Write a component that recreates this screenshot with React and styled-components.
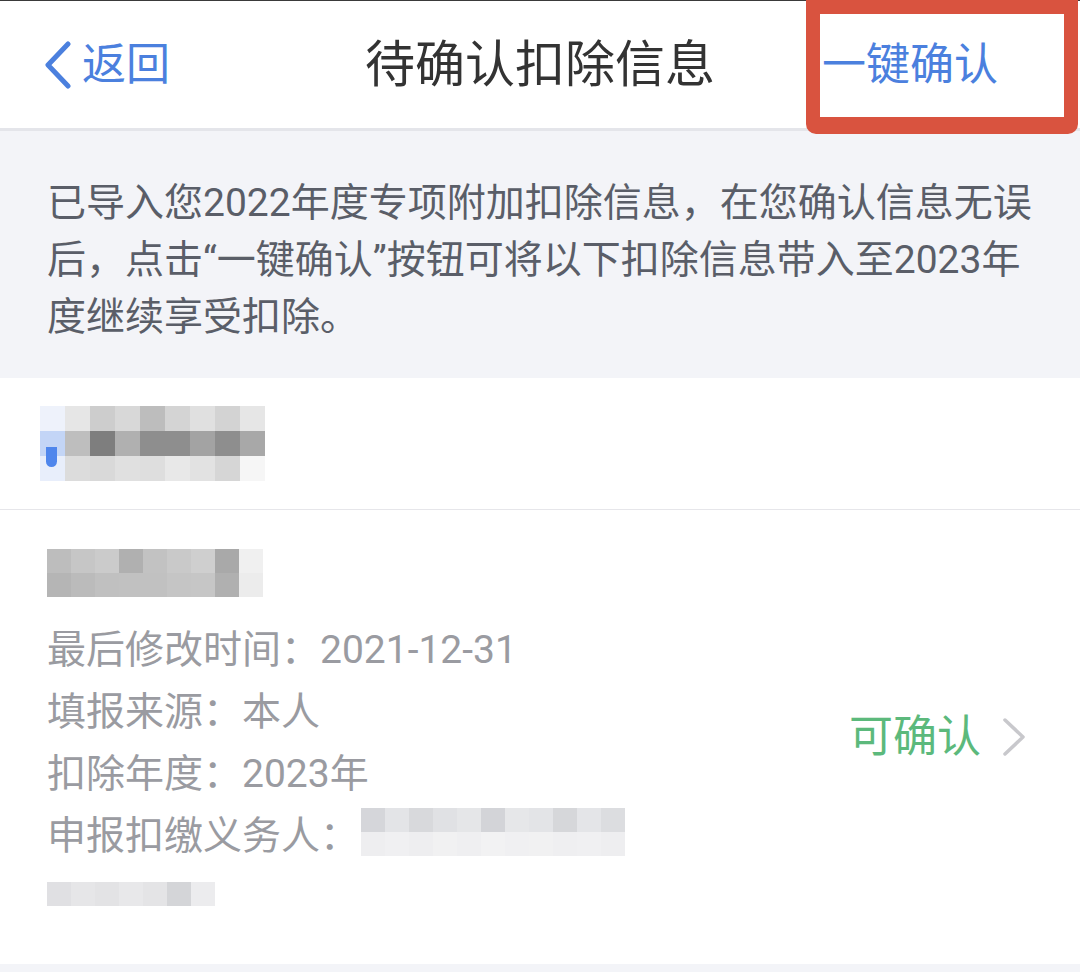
import React from "react";
import styled, { createGlobalStyle } from "styled-components";

const GlobalStyle = createGlobalStyle`
  html, body {
    margin: 0;
    padding: 0;
    background: #ffffff;
  }
  * {
    box-sizing: border-box;
  }
`;

const Page = styled.div`
  width: 1080px;
  height: 972px;
  overflow: hidden;
  display: flex;
  flex-direction: column;
  background: #f3f4f8;
  font-family: Roboto, "Noto Sans CJK SC", sans-serif;
`;

const NavBar = styled.header`
  position: relative;
  height: 131px;
  flex-shrink: 0;
  display: grid;
  grid-template-columns: 1fr auto 1fr;
  align-items: center;
  background: #ffffff;
  border-top: 1px solid #3a3a3a;
  border-bottom: 3px solid #e4e5ea;
`;

const BackButton = styled.div`
  display: flex;
  align-items: center;
  gap: 10px;
  padding-left: 44px;
  color: #4b80de;
  font-size: 44px;
  line-height: 1;
  justify-self: start;
`;

const Title = styled.h1`
  margin: 0;
  font-size: 50px;
  font-weight: 400;
  color: #333333;
  line-height: 1;
`;

const NavAction = styled.div`
  justify-self: end;
  padding-right: 82px;
  color: #4b80de;
  font-size: 44px;
  line-height: 1;
`;

/* red annotation frame laid over the nav action */
const Highlight = styled.div`
  position: absolute;
  top: -1px;
  left: 806px;
  width: 272px;
  height: 134px;
  border: 14px solid #d9533f;
  border-bottom-width: 17px;
  border-radius: 0 0 10px 10px;
  pointer-events: none;
`;

const Notice = styled.section`
  flex-shrink: 0;
  padding: 44px 30px 32px 47px;
  background: #f3f4f8;
  color: #5a5e68;
  font-size: 39px;
  line-height: 57px;
  white-space: nowrap;
`;

const NoticeLine = styled.div``;

const NameRow = styled.div`
  flex-shrink: 0;
  height: 132px;
  display: flex;
  align-items: center;
  padding-left: 40px;
  background: #ffffff;
  border-bottom: 1px solid #e6e6ea;
`;

const ItemRow = styled.div`
  flex-shrink: 0;
  height: 454px;
  display: flex;
  align-items: center;
  justify-content: space-between;
  padding: 39px 53px 39px 47px;
  background: #ffffff;
`;

const InfoColumn = styled.div`
  display: flex;
  flex-direction: column;
`;

const InfoLine = styled.div`
  height: ${(p) => p.$h || 62}px;
  display: flex;
  align-items: ${(p) => (p.$top ? "flex-start" : "center")};
  font-size: 39px;
  color: #9a9ba1;
  white-space: nowrap;
`;

const Status = styled.div`
  display: flex;
  align-items: center;
  gap: 20px;
  color: #5cb97c;
  font-size: 44px;
  line-height: 1;
`;

const MosaicWrap = styled.div`
  position: relative;
  display: inline-flex;
  flex-direction: column;
  margin-left: ${(p) => p.$gap || 0}px;
`;

const Mosaic = styled.div`
  display: grid;
  grid-template-columns: repeat(${(p) => p.$cols}, ${(p) => p.$size}px);
  grid-auto-rows: ${(p) => p.$size}px;
`;

const Cell = styled.span`
  background: ${(p) => p.$c};
`;

const BlueTag = styled.span`
  position: absolute;
  left: 6px;
  top: 41px;
  width: 11px;
  height: 20px;
  border-radius: 0 0 6px 6px;
  background: #4f86ec;
`;

const Footer = styled.div`
  flex: 1;
  background: #f3f4f8;
`;

const nameCells = [
  ["#eef2fb", "#e6e6e6", "#cdcdcd", "#d8d8d8", "#bdbdbd", "#d4d4d4", "#e0e0e0", "#d3d3d3", "#e6e6e6"],
  ["#c3d5f6", "#bebebe", "#7e7e7e", "#b0b0b0", "#8e8e8e", "#8e8e8e", "#a3a3a3", "#8e8e8e", "#a8a8a8"],
  ["#e8eefb", "#dcdcdc", "#d9d9d9", "#e0e0e0", "#dedede", "#e8e8e8", "#e2e2e2", "#d6d6d6", "#f6f6f6"],
];

const itemCells = [
  ["#bdbdbd", "#c6c6c6", "#cbcbcb", "#b0b0b0", "#c2c2c2", "#c9c9c9", "#cfcfcf", "#a9a9a9", "#f0f0f0"],
  ["#b5b5b5", "#bbbbbb", "#c0c0c0", "#c1c1c1", "#c1c1c1", "#c5c5c5", "#c6c6c6", "#b0b0b0", "#ececec"],
];

const agentCells = [
  ["#d5d6da", "#e3e4e7", "#d8d9dc", "#e0e1e4", "#e5e6e8", "#d3d4d8", "#e6e7e9", "#e3e4e7", "#d6d7da", "#e4e5e8", "#dcdde0"],
  ["#eeeef0", "#f0f0f2", "#eeeef0", "#f1f1f2", "#efeff1", "#f2f2f3", "#f0f0f2", "#f1f1f2", "#efeff1", "#f0f0f2", "#eeeef0"],
];

const agentTailCells = [
  ["#e0e0e3", "#e6e6e8", "#e3e3e5", "#e8e8ea", "#e4e4e6", "#d4d5d8", "#ececee"],
];

const Pixelated = ({ rows, size = 24, gap, children }) => (
  <MosaicWrap $gap={gap}>
    <Mosaic $cols={rows[0].length} $size={size}>
      {rows.flat().map((c, i) => (
        <Cell key={i} $c={c} />
      ))}
    </Mosaic>
    {children}
  </MosaicWrap>
);

const ChevronLeft = () => (
  <svg width="28" height="48" viewBox="0 0 28 48" fill="none">
    <path d="M24 3 L4 24 L24 45" stroke="#4b80de" strokeWidth="5" strokeLinecap="round" strokeLinejoin="round" />
  </svg>
);

const ChevronRight = () => (
  <svg width="26" height="40" viewBox="0 0 26 40" fill="none">
    <path d="M4 3 L22 20 L4 37" stroke="#c8c8cc" strokeWidth="3.5" strokeLinecap="round" strokeLinejoin="round" />
  </svg>
);

const App = () => {
  return (
    <Page>
      <GlobalStyle />
      <NavBar>
        <BackButton>
          <ChevronLeft />
          <span>返回</span>
        </BackButton>
        <Title>待确认扣除信息</Title>
        <NavAction>一键确认</NavAction>
        <Highlight />
      </NavBar>
      <Notice>
        <NoticeLine>已导入您2022年度专项附加扣除信息，在您确认信息无误</NoticeLine>
        <NoticeLine>后，点击“一键确认”按钮可将以下扣除信息带入至2023年</NoticeLine>
        <NoticeLine>度继续享受扣除。</NoticeLine>
      </Notice>
      <NameRow>
        <Pixelated rows={nameCells} size={25}>
          <BlueTag />
        </Pixelated>
      </NameRow>
      <ItemRow>
        <InfoColumn>
          <InfoLine $h={66} $top>
            <Pixelated rows={itemCells} size={24} />
          </InfoLine>
          <InfoLine>最后修改时间：2021-12-31</InfoLine>
          <InfoLine>填报来源：本人</InfoLine>
          <InfoLine>扣除年度：2023年</InfoLine>
          <InfoLine>
            申报扣缴义务人：
            <Pixelated rows={agentCells} size={24} gap={2} />
          </InfoLine>
          <InfoLine>
            <Pixelated rows={agentTailCells} size={24} />
          </InfoLine>
        </InfoColumn>
        <Status>
          <span>可确认</span>
          <ChevronRight />
        </Status>
      </ItemRow>
      <Footer />
    </Page>
  );
};

export default App;
